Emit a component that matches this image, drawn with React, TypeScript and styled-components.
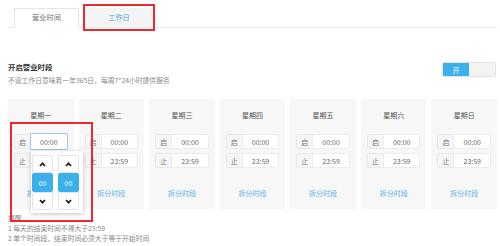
import React from "react";
import styled, { createGlobalStyle } from "styled-components";

const Global = createGlobalStyle`
  html, body { margin: 0; padding: 0; background: #fff; }
  body { font-family: "Noto Sans CJK SC", "Noto Sans", sans-serif; }
  * { box-sizing: border-box; }
`;

const Page = styled.div`
  position: relative;
  width: 500px;
  height: 246px;
  overflow: hidden;
  padding: 0 3px 0 8px;
`;

const TabBar = styled.div`
  display: flex;
  align-items: flex-end;
  margin-top: 8px;
  padding-left: 6px;
  height: 20px;
  border-bottom: 1px solid #ebebeb;
`;

const Tab = styled.div<{ $active?: boolean; $w: number; $ml?: number }>`
  width: ${(p) => p.$w}px;
  height: 20px;
  margin-left: ${(p) => p.$ml || 0}px;
  margin-bottom: -1px;
  display: flex;
  align-items: center;
  justify-content: center;
  font-size: 7.2px;
  line-height: 1;
  color: ${(p) => (p.$active ? "#6e6e6e" : "#4aa6e0")};
  background: ${(p) => (p.$active ? "#fff" : "#f4f4f4")};
  border: 1px solid ${(p) => (p.$active ? "#e6e6e6" : "#f4f4f4")};
  border-bottom: ${(p) => (p.$active ? "1px solid #fff" : "1px solid #ebebeb")};
`;

const Header = styled.div`
  display: flex;
  justify-content: space-between;
  align-items: flex-start;
  margin-top: 34px;
`;

const HeaderText = styled.div`
  display: flex;
  flex-direction: column;
`;

const Title = styled.div`
  font-size: 7.4px;
  line-height: 10px;
  font-weight: bold;
  color: #333;
`;

const Sub = styled.div`
  margin-top: 3px;
  font-size: 6.8px;
  line-height: 10px;
  color: #8a8a8a;
`;

const Toggle = styled.div`
  display: flex;
  width: 54px;
  height: 15px;
  margin-right: 1px;
  border-radius: 2px;
  overflow: hidden;
  border: 1px solid #e2e2e2;
`;

const ToggleOn = styled.div`
  flex: 1;
  background: #3bb0ea;
  color: #fff;
  font-size: 7px;
  display: flex;
  align-items: center;
  justify-content: center;
`;

const ToggleOff = styled.div`
  flex: 1;
  background: #f3f3f3;
`;

const Cards = styled.div`
  display: flex;
  gap: 5px;
  margin-top: 14px;
`;

const Card = styled.div`
  position: relative;
  flex: 1;
  height: 110px;
  background: #f7f7f7;
  padding: 11px 6px 0;
  display: flex;
  flex-direction: column;
  align-items: stretch;
`;

const Day = styled.div`
  font-size: 7px;
  line-height: 10px;
  text-align: center;
  color: #555;
  margin-bottom: 14px;
`;

const Row = styled.div`
  display: flex;
  height: 15px;
  margin-bottom: 4px;
`;

const Label = styled.div`
  width: 17px;
  border: 1px solid #e8e8e8;
  border-radius: 2px 0 0 2px;
  background: #f6f6f6;
  color: #777;
  font-size: 7px;
  display: flex;
  align-items: center;
  justify-content: center;
`;

const Value = styled.div<{ $focus?: boolean }>`
  position: relative;
  flex: 1;
  margin-left: -1px;
  border: 1px solid ${(p) => (p.$focus ? "#9fc4f0" : "#ececec")};
  border-radius: 0 2px 2px 0;
  background: #fff;
  color: #666;
  font-size: 7px;
  display: flex;
  align-items: center;
  justify-content: center;
  ${(p) => (p.$focus ? "margin-top:-1px;margin-bottom:-1px;" : "")}
`;

const Split = styled.div`
  margin-top: 16px;
  font-size: 7px;
  line-height: 10px;
  text-align: center;
  color: #5ab4e8;
`;

const Picker = styled.div`
  position: absolute;
  left: 23px;
  top: 52px;
  width: 52px;
  height: 62px;
  background: #fff;
  box-shadow: 0 1px 4px rgba(0, 0, 0, 0.25);
  padding: 4px 2px 0 1px;
  display: flex;
  gap: 5px;
  z-index: 2;
`;

const PickCol = styled.div`
  width: 21px;
  display: flex;
  flex-direction: column;
`;

const ArrowBtn = styled.div`
  height: 18px;
  background: #fff;
  border: 1px solid #e4e4e4;
  border-radius: 2px;
  display: flex;
  align-items: center;
  justify-content: center;
`;

const NumCell = styled.div`
  height: 19px;
  background: #3bb0ea;
  border-radius: 2px;
  color: #fff;
  font-size: 7px;
  display: flex;
  align-items: center;
  justify-content: center;
`;

const Colon = styled.div`
  position: absolute;
  left: 23px;
  top: 26px;
  width: 5px;
  text-align: center;
  font-size: 6px;
  line-height: 8px;
  color: #c4c4c4;
`;

const Notes = styled.div`
  margin-top: 4px;
  font-size: 6.8px;
  line-height: 10px;
  color: #888;
`;

const Mark = styled.div<{ $l: number; $t: number; $w: number; $h: number }>`
  position: absolute;
  left: ${(p) => p.$l}px;
  top: ${(p) => p.$t}px;
  width: ${(p) => p.$w}px;
  height: ${(p) => p.$h}px;
  border: 2px solid #ea2a2f;
  z-index: 5;
  pointer-events: none;
`;

const Chevron = ({ up }: { up?: boolean }) => (
  <svg width="7" height="5" viewBox="0 0 7 5">
    <polyline
      points={up ? "1,4 3.5,1.3 6,4" : "1,1 3.5,3.7 6,1"}
      fill="none"
      stroke="#222"
      strokeWidth="1.8"
    />
  </svg>
);

const days = ["星期一", "星期二", "星期三", "星期四", "星期五", "星期六", "星期日"];

export default function App() {
  return (
    <>
      <Global />
      <Page>
        <TabBar>
          <Tab $active $w={65}>营业时间</Tab>
          <Tab $w={68} $ml={6}>工作日</Tab>
        </TabBar>
        <Header>
          <HeaderText>
            <Title>开启营业时段</Title>
            <Sub>不设工作日意味着一年365日，每周7*24小时提供服务</Sub>
          </HeaderText>
          <Toggle>
            <ToggleOn>开</ToggleOn>
            <ToggleOff />
          </Toggle>
        </Header>
        <Cards>
          {days.map((d, i) => (
            <Card key={d}>
              <Day>{d}</Day>
              <Row>
                <Label>启</Label>
                <Value $focus={i === 0}>00:00</Value>
              </Row>
              <Row>
                <Label>止</Label>
                <Value>23:59</Value>
              </Row>
              <Split>拆分时段</Split>
              {i === 0 && (
                <Picker>
                  <PickCol>
                    <ArrowBtn><Chevron up /></ArrowBtn>
                    <NumCell>00</NumCell>
                    <ArrowBtn><Chevron /></ArrowBtn>
                  </PickCol>
                  <Colon>:</Colon>
                  <PickCol>
                    <ArrowBtn><Chevron up /></ArrowBtn>
                    <NumCell>00</NumCell>
                    <ArrowBtn><Chevron /></ArrowBtn>
                  </PickCol>
                </Picker>
              )}
            </Card>
          ))}
        </Cards>
        <Notes>
          <div>提醒</div>
          <div>1 每天的结束时间不得大于23:59</div>
          <div>2 单个时间段，结束时间必须大于等于开始时间</div>
        </Notes>
        <Mark $l={83} $t={4} $w={72} $h={27} />
        <Mark $l={10} $t={122} $w={83} $h={100} />
      </Page>
    </>
  );
}
